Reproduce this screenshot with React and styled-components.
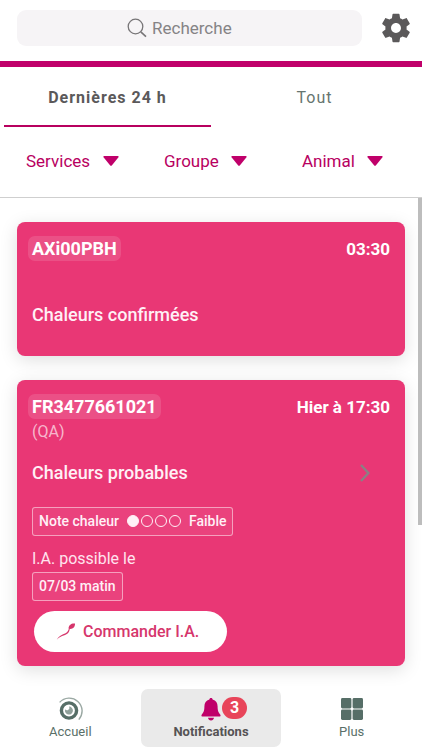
import styled, { createGlobalStyle } from "styled-components";

const GlobalStyle = createGlobalStyle`
  * {
    box-sizing: border-box;
  }
  body {
    margin: 0;
    background-color: white;
    font-family: Roboto, "Liberation Sans", sans-serif;
  }
  button,
  input,
  select {
    margin: 0;
    padding: 0;
    border: none;
    background: none;
    font-family: inherit;
    cursor: pointer;
  }
  p,
  h2 {
    margin: 0;
  }
`;

const Page = styled.div`
  display: flex;
  flex-direction: column;
  height: 100vh;
`;

const Header = styled.header`
  display: flex;
  align-items: center;
  gap: 17px;
  padding: 10px 9px 15px 17px;
  border-bottom: 6px solid #c0006a;
`;

const SearchBox = styled.label`
  flex: 1;
  display: flex;
  align-items: center;
  justify-content: center;
  gap: 5px;
  height: 36px;
  padding-right: 20px;
  border-radius: 9px;
  background-color: #f6f4f6;
  color: #777577;
`;

const SearchInput = styled.input`
  width: 80px;
  font-size: 17px;
  color: #777577;
  outline: none;
  cursor: text;
  &::placeholder {
    color: #858385;
    opacity: 1;
  }
`;

const IconButton = styled.button`
  display: flex;
  color: #5b595a;
`;

const Tabs = styled.div`
  display: grid;
  grid-template-columns: 1fr 1fr;
  padding: 0 4px;
`;

const Tab = styled.button`
  height: 60px;
  padding-top: 2px;
  border-bottom: 2px solid ${(props) => (props.$active ? "#b8005f" : "transparent")};
  color: ${(props) => (props.$active ? "#5b595a" : "#66756f")};
  font-size: 16px;
  font-weight: ${(props) => (props.$active ? 700 : 400)};
  letter-spacing: 1px;
`;

const Filters = styled.div`
  display: grid;
  grid-template-columns: repeat(3, 1fr);
  gap: 18px;
  height: 71px;
  padding: 0 0 2px 26px;
  border-bottom: 1px solid #cfcfcf;
`;

const Filter = styled.label`
  display: flex;
  align-items: center;
  gap: 12px;
  color: #c0006a;
`;

const FilterSelect = styled.select`
  appearance: none;
  color: #b8005f;
  font-size: 17px;
`;

const Content = styled.main`
  position: relative;
  flex: 1;
  min-height: 0;
`;

const List = styled.div`
  display: flex;
  flex-direction: column;
  gap: 24px;
  height: 100%;
  padding: 24px 17px;
  overflow-y: auto;
  scrollbar-width: none;
`;

const ScrollThumb = styled.div`
  position: absolute;
  top: 0;
  right: 0;
  width: 4px;
  height: 67%;
  background-color: #bdbdbd;
`;

const Card = styled.article`
  display: flex;
  flex-direction: column;
  align-items: flex-start;
  flex-shrink: 0;
  padding: 14px 15px;
  border-radius: 8px;
  background-color: #e93775;
  box-shadow: 0 4px 18px rgba(0, 0, 0, 0.13);
  color: white;
`;

const CardTop = styled.div`
  display: flex;
  align-items: center;
  justify-content: space-between;
  align-self: stretch;
  font-size: 17px;
  font-weight: 700;
`;

const AnimalId = styled.span`
  margin-left: -4px;
  padding: 0 4px;
  border-radius: 7px;
  background-color: rgba(255, 255, 255, 0.13);
  font-size: 18px;
  line-height: 25px;
`;

const SubText = styled.p`
  height: 40px;
  padding-top: 3px;
  color: rgba(255, 255, 255, 0.65);
  font-size: 16px;
  line-height: 20px;
`;

const CardTitle = styled.div`
  display: flex;
  align-items: center;
  justify-content: space-between;
  align-self: stretch;
  padding-right: 20px;
  color: #fff0f6;
  line-height: 28px;
  h2 {
    font-size: 18px;
    font-weight: 500;
  }
  svg {
    color: #8c7f84;
  }
`;

const FirstTitle = styled(CardTitle)`
  margin: 40px 0 13px;
`;

const Tag = styled.div`
  display: flex;
  align-items: center;
  gap: 8px;
  height: 29px;
  padding: 0 6px 1px;
  border: 1px solid rgba(255, 255, 255, 0.5);
  border-radius: 3px;
  background-color: rgba(255, 255, 255, 0.06);
  color: #fff0f6;
  font-size: 14px;
  font-weight: 500;
`;

const NoteTag = styled(Tag)`
  margin: 20px 0 13px;
`;

const Dots = styled.span`
  display: flex;
  gap: 2px;
`;

const Dot = styled.span`
  width: 12px;
  height: 12px;
  border: 1px solid #fff0f6;
  border-radius: 50%;
  background-color: ${(props) => (props.$filled ? "#fff0f6" : "transparent")};
`;

const Label = styled.p`
  margin-bottom: 3px;
  color: #ffe3ee;
  font-size: 16px;
  line-height: 20px;
`;

const OrderButton = styled.button`
  display: flex;
  align-items: center;
  gap: 7px;
  height: 41px;
  margin: 10px 2px 0;
  padding: 0 28px 0 22px;
  border-radius: 21px;
  background-color: white;
  color: #d6366c;
  font-size: 16px;
  font-weight: 500;
`;

const Nav = styled.nav`
  display: grid;
  grid-template-columns: repeat(3, 1fr);
  padding: 3px 0;
  background-color: white;
`;

const NavItem = styled.a`
  display: flex;
  flex-direction: column;
  align-items: center;
  height: 58px;
  padding-top: 7px;
  border-radius: 7px;
  background-color: ${(props) => (props.$active ? "#eaeaea" : "transparent")};
  color: ${(props) => (props.$active ? "#555354" : "#5a6f68")};
  font-size: 13px;
  font-weight: ${(props) => (props.$active ? 700 : 400)};
  line-height: 20px;
  text-decoration: none;
`;

const NavIcon = styled.span`
  position: relative;
  display: flex;
  align-items: center;
  height: 26px;
`;

const Badge = styled.span`
  position: absolute;
  top: 1px;
  left: 21px;
  width: 25px;
  border-radius: 11px;
  background-color: #e8455a;
  color: white;
  font-size: 16px;
  line-height: 22px;
  text-align: center;
`;

function SearchIcon() {
  return (
    <svg width="20" height="20" viewBox="0 0 20 20" fill="none" stroke="currentColor" strokeWidth="1.3">
      <circle cx="8.5" cy="8.5" r="7.3" />
      <path d="M13.8 13.8 L19 18.6" strokeWidth="1.6" />
    </svg>
  );
}

function GearIcon() {
  return (
    <svg width="34" height="34" viewBox="0 0 24 24" fill="currentColor">
      <path d="M19.43 12.98c.04-.32.07-.64.07-.98s-.03-.66-.07-.98l2.11-1.65c.19-.15.24-.42.12-.64l-2-3.46c-.12-.22-.39-.3-.61-.22l-2.49 1c-.52-.4-1.08-.73-1.69-.98l-.38-2.65C14.46 2.18 14.25 2 14 2h-4c-.25 0-.46.18-.49.42l-.38 2.65c-.61.25-1.17.59-1.69.98l-2.49-1c-.23-.09-.49 0-.61.22l-2 3.46c-.13.22-.07.49.12.64l2.11 1.65c-.04.32-.07.65-.07.98s.03.66.07.98l-2.11 1.65c-.19.15-.24.42-.12.64l2 3.46c.12.22.39.3.61.22l2.49-1c.52.4 1.08.73 1.69.98l.38 2.65c.03.24.24.42.49.42h4c.25 0 .46-.18.49-.42l.38-2.65c.61-.25 1.17-.59 1.69-.98l2.49 1c.23.09.49 0 .61-.22l2-3.46c.12-.22.07-.49-.12-.64l-2.11-1.65zM12 15.5c-1.93 0-3.5-1.57-3.5-3.5s1.57-3.5 3.5-3.5 3.5 1.57 3.5 3.5-1.57 3.5-3.5 3.5z" />
    </svg>
  );
}

function CaretIcon() {
  return (
    <svg width="16" height="10" viewBox="0 0 16 10" fill="currentColor">
      <path d="M1.2 0 H14.8 Q16.2 0.4 15.3 1.6 L8.8 9.4 Q8 10.2 7.2 9.4 L0.7 1.6 Q-0.2 0.4 1.2 0 Z" />
    </svg>
  );
}

function ChevronIcon() {
  return (
    <svg width="10" height="18" viewBox="0 0 10 18" fill="none" stroke="currentColor" strokeWidth="2.4">
      <path d="M1 1 L8.4 9 L1 17" />
    </svg>
  );
}

function SeedIcon() {
  return (
    <svg width="20" height="18" viewBox="0 0 20 18">
      <path d="M19 0.5 C15.5 0 12.6 2 12.5 5.6 C16 6.8 19.2 4.6 19 0.5 Z" fill="currentColor" />
      <path
        d="M13.2 4.8 C12.6 6.2 12.6 7.8 10.6 9.4 C8 11.4 3.6 11.4 0.8 16.8 C3.8 12.6 8.6 12.8 11.6 10.4 C13.6 8.8 13.2 6.8 14 5.4 Z"
        fill="currentColor"
      />
    </svg>
  );
}

function EyeIcon() {
  return (
    <svg width="26" height="26" viewBox="0 0 26 26" fill="none">
      <path d="M2.6 6.4 A11.8 11.8 0 0 1 21.8 23.6" stroke="#9aa8a3" strokeWidth="1.4" />
      <circle cx="12" cy="14.5" r="7.6" stroke="#566e67" strokeWidth="3.4" />
      <path d="M12 10.6 A4 4 0 1 1 8.2 13.2 A2.2 2.2 0 0 0 12 10.6 Z" fill="#8fa09a" />
    </svg>
  );
}

function BellIcon() {
  return (
    <svg width="20" height="23" viewBox="0 0 20 23" fill="#c0006a">
      <path d="M10 0 C11 0 11.6 0.7 11.6 1.6 C15 2.4 16.6 5 16.6 8.6 C16.6 13 17.6 14.6 19.2 16.4 C20 17.4 19.5 18.6 18.3 18.6 H1.7 C0.5 18.6 0 17.4 0.8 16.4 C2.4 14.6 3.4 13 3.4 8.6 C3.4 5 5 2.4 8.4 1.6 C8.4 0.7 9 0 10 0 Z" />
      <path d="M7 19.8 H13 C12.8 21.4 11.6 22.4 10 22.4 C8.4 22.4 7.2 21.4 7 19.8 Z" />
    </svg>
  );
}

function GridIcon() {
  return (
    <svg width="22" height="22" viewBox="0 0 22 22" fill="#566e67">
      <rect width="10.4" height="10.4" rx="1.4" />
      <rect x="11.6" width="10.4" height="10.4" rx="1.4" />
      <rect y="11.6" width="10.4" height="10.4" rx="1.4" />
      <rect x="11.6" y="11.6" width="10.4" height="10.4" rx="1.4" />
    </svg>
  );
}

const filters = ["Services", "Groupe", "Animal"];
const notes = [true, false, false, false];

export default function App() {
  return (
    <>
      <GlobalStyle />
      <Page>
        <Header>
          <SearchBox>
            <SearchIcon />
            <SearchInput type="text" name="q" placeholder="Recherche" aria-label="Recherche" />
          </SearchBox>
          <IconButton type="button" aria-label="Paramètres">
            <GearIcon />
          </IconButton>
        </Header>

        <Tabs role="tablist">
          <Tab type="button" role="tab" aria-selected="true" $active>
            Dernières 24 h
          </Tab>
          <Tab type="button" role="tab" aria-selected="false">
            Tout
          </Tab>
        </Tabs>

        <Filters>
          {filters.map((name) => (
            <Filter key={name}>
              <FilterSelect aria-label={name}>
                <option>{name}</option>
              </FilterSelect>
              <CaretIcon />
            </Filter>
          ))}
        </Filters>

        <Content>
          <List>
            <Card>
              <CardTop>
                <AnimalId>AXi00PBH</AnimalId>
                <time>03:30</time>
              </CardTop>
              <FirstTitle>
                <h2>Chaleurs confirmées</h2>
              </FirstTitle>
            </Card>

            <Card>
              <CardTop>
                <AnimalId>FR3477661021</AnimalId>
                <time>Hier à 17:30</time>
              </CardTop>
              <SubText>(QA)</SubText>
              <CardTitle>
                <h2>Chaleurs probables</h2>
                <ChevronIcon />
              </CardTitle>
              <NoteTag>
                <span>Note chaleur</span>
                <Dots>
                  {notes.map((filled, i) => (
                    <Dot key={i} $filled={filled} />
                  ))}
                </Dots>
                <span>Faible</span>
              </NoteTag>
              <Label>I.A. possible le</Label>
              <Tag>07/03 matin</Tag>
              <OrderButton type="button">
                <SeedIcon />
                Commander I.A.
              </OrderButton>
            </Card>
          </List>
          <ScrollThumb />
        </Content>

        <Nav>
          <NavItem href="#accueil">
            <NavIcon>
              <EyeIcon />
            </NavIcon>
            Accueil
          </NavItem>
          <NavItem href="#notifications" $active>
            <NavIcon>
              <BellIcon />
              <Badge>3</Badge>
            </NavIcon>
            Notifications
          </NavItem>
          <NavItem href="#plus">
            <NavIcon>
              <GridIcon />
            </NavIcon>
            Plus
          </NavItem>
        </Nav>
      </Page>
    </>
  );
}
